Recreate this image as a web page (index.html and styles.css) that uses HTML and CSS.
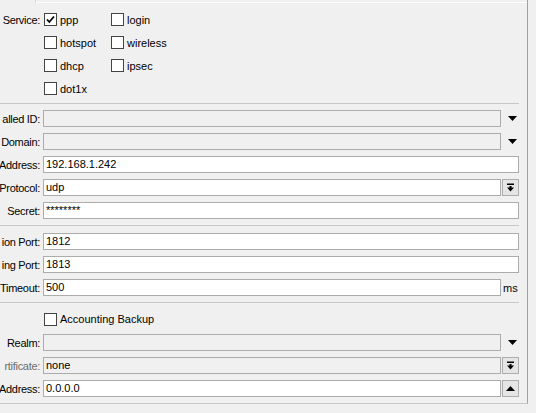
FILE: index.html
```html
<!DOCTYPE html>
<html>
	<head>
		<meta charset="utf-8">
		<title>RADIUS</title>
		<link rel="stylesheet" href="styles.css">
	</head>
	<body>
		<div class="frame">
			<div class="tabstrip">
				<div class="tab"></div>
				<div class="tabline"></div>
			</div>

			<!-- service -->
			<div class="section first">
				<div class="row">
					<div class="label">Service:</div>
					<div class="checks">
						<label class="check"><span class="box on"><svg width="11" height="11" viewBox="0 0 11 11"><path d="M2 5.5 L4.3 8 L9 2.5" fill="none" stroke="#000" stroke-width="1.8"/></svg></span>ppp</label>
						<label class="check"><span class="box"></span>login</label>
					</div>
				</div>
				<div class="row">
					<div class="label"></div>
					<div class="checks">
						<label class="check"><span class="box"></span>hotspot</label>
						<label class="check"><span class="box"></span>wireless</label>
					</div>
				</div>
				<div class="row">
					<div class="label"></div>
					<div class="checks">
						<label class="check"><span class="box"></span>dhcp</label>
						<label class="check"><span class="box"></span>ipsec</label>
					</div>
				</div>
				<div class="row">
					<div class="label"></div>
					<div class="checks">
						<label class="check"><span class="box"></span>dot1x</label>
					</div>
				</div>
			</div>

			<!-- server -->
			<div class="section">
				<div class="row">
					<div class="label">alled ID:</div>
					<div class="field off"></div>
					<div class="trail"><svg class="tri" width="9" height="5" viewBox="0 0 9 5"><polygon points="0,0 9,0 4.5,5" fill="#000"/></svg></div>
				</div>
				<div class="row">
					<div class="label">Domain:</div>
					<div class="field off"></div>
					<div class="trail"><svg class="tri" width="9" height="5" viewBox="0 0 9 5"><polygon points="0,0 9,0 4.5,5" fill="#000"/></svg></div>
				</div>
				<div class="row">
					<div class="label">Address:</div>
					<div class="field">192.168.1.242</div>
				</div>
				<div class="row">
					<div class="label">Protocol:</div>
					<div class="field">udp</div>
					<div class="trail"><div class="btn"><svg width="9" height="9" viewBox="0 0 9 9"><rect x="1" y="0.5" width="7" height="1.5" fill="#000"/><rect x="3.5" y="3" width="2" height="2" fill="#000"/><polygon points="1,4.5 8,4.5 4.5,8.5" fill="#000"/></svg></div></div>
				</div>
				<div class="row">
					<div class="label">Secret:</div>
					<div class="field">********</div>
				</div>
			</div>

			<!-- ports -->
			<div class="section ports">
				<div class="row">
					<div class="label">ion Port:</div>
					<div class="field">1812</div>
				</div>
				<div class="row">
					<div class="label">ing Port:</div>
					<div class="field">1813</div>
				</div>
				<div class="row">
					<div class="label">Timeout:</div>
					<div class="field">500</div>
					<div class="trail unit">ms</div>
				</div>
			</div>

			<!-- backup -->
			<div class="section last">
				<div class="row tall">
					<div class="label"></div>
					<label class="check wide"><span class="box"></span>Accounting Backup</label>
				</div>
				<div class="row">
					<div class="label">Realm:</div>
					<div class="field off"></div>
					<div class="trail"><svg class="tri" width="9" height="5" viewBox="0 0 9 5"><polygon points="0,0 9,0 4.5,5" fill="#000"/></svg></div>
				</div>
				<div class="row">
					<div class="label dim">rtificate:</div>
					<div class="field off">none</div>
					<div class="trail"><div class="btn"><svg width="9" height="9" viewBox="0 0 9 9"><rect x="1" y="0.5" width="7" height="1.5" fill="#000"/><rect x="3.5" y="3" width="2" height="2" fill="#000"/><polygon points="1,4.5 8,4.5 4.5,8.5" fill="#000"/></svg></div></div>
				</div>
				<div class="row">
					<div class="label">Address:</div>
					<div class="field">0.0.0.0</div>
					<div class="trail"><div class="btn"><svg width="9" height="5" viewBox="0 0 9 5"><polygon points="0,5 9,5 4.5,0" fill="#000"/></svg></div></div>
				</div>
			</div>
		</div>
	</body>
</html>
```

FILE: styles.css
```css
*{
    padding:0;
    margin:0;
    box-sizing:border-box;
}
body{
    background:#f0f0f0;
    font-family:"Liberation Sans", Arial, sans-serif;
    font-size:11px;
    color:#000;
    overflow:hidden;
}
.frame{
    width:528px;
    height:404px;
    padding-right:8px;
    border-right:1px solid #a0a0a0;
    border-bottom:1px solid #c8c8c8;
}
.tabstrip{
    display:flex;
    height:3px;
    margin-right:-8px;
}
.tab{
    width:36px;
    border-right:1px solid #d9d9d9;
}
.tabline{
    flex:1;
    border-bottom:1px solid #fff;
}
.section{
    padding:3px 0;
    border-bottom:1px solid #c8c8c8;
}
.section.first{
    padding-top:5px;
}
.section.ports{
    padding-top:4px;
}
.section.last{
    padding-top:4px;
    padding-bottom:4px;
    border-bottom:none;
}
.row{
    display:flex;
    align-items:center;
    height:23px;
}
.row.tall{
    height:24px;
}
.label{
    width:40px;
    flex:none;
    margin-right:3px;
    display:flex;
    justify-content:flex-end;
    white-space:nowrap;
    letter-spacing:-0.3px;
}
.label.dim{
    color:#6d6d6d;
}
.checks{
    display:flex;
}
.check{
    display:flex;
    align-items:center;
    width:67px;
    white-space:nowrap;
}
.check.wide{
    width:auto;
}
.box{
    flex:none;
    width:13px;
    height:13px;
    margin-left:1px;
    margin-right:3px;
    border:1px solid #444;
    background:#fff;
    display:flex;
    align-items:center;
    justify-content:center;
}
.field{
    flex:1;
    height:17px;
    border:1px solid #acacac;
    background:#fff;
    padding-left:2px;
    line-height:15px;
    white-space:nowrap;
}
.field.off{
    background:#f0f0f0;
}
.trail{
    width:17px;
    margin-left:1px;
    flex:none;
    display:flex;
    align-items:center;
}
.tri{
    margin-left:6px;
}
.unit{
    padding-left:1px;
}
.btn{
    width:17px;
    height:17px;
    border:1px solid #adadad;
    background:#e5e5e5;
    display:flex;
    align-items:center;
    justify-content:center;
}
```
